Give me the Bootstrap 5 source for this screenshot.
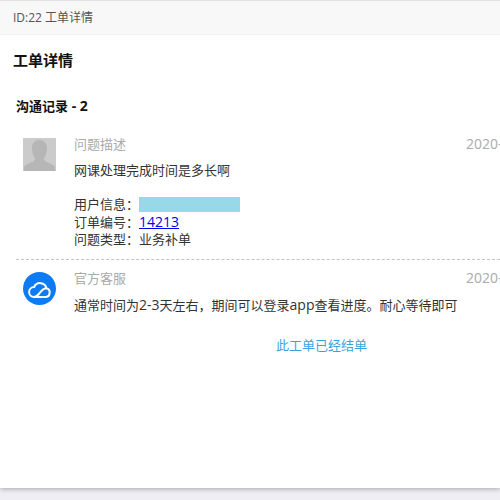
<!DOCTYPE html>
<html lang="zh">
<head>
<meta charset="utf-8">
<link rel="stylesheet" href="https://cdn.jsdelivr.net/npm/bootstrap@5.3.0/dist/css/bootstrap.min.css">
<style>
html,body{height:500px;overflow:hidden;}
body{background:#eeeef4;font-family:"Open Sans","Noto Sans CJK SC",sans-serif;font-size:13px;color:#333;}
.sheet{height:488px;background:#fff;box-shadow:0 1px 5px rgba(0,0,0,.3);border-top:1px solid #e2e2e2;overflow:hidden;}
.crumb{height:34px;background:#f8f8f8;padding-left:13px;line-height:34px;color:#555;font-size:12px;border-bottom:1px solid #f1f1f1;}
.page-title{font-size:15px;font-weight:700;color:#111;margin:0;padding:14px 0 0 13px;line-height:22px;}
.sec-title{font-size:13px;font-weight:700;color:#111;margin:0;padding:25px 0 0 16px;line-height:20px;}
.entry{padding:0 0 0 23px;gap:18px;}
.first{margin-top:21px;height:122px;}
.second{margin-top:0;padding-top:1px;}
.divider{margin:0 0 0 16px;border-top:1px dashed #c4c4c4;height:11px;}
.pic{width:33px;height:33px;flex:0 0 33px;display:block;margin-top:1px;}
.who{width:392px;flex:0 0 392px;color:#aaa;line-height:14px;font-size:13px;}
.stamp{color:#aaa;white-space:nowrap;line-height:14px;font-size:14px;}
.msg{margin-top:10px;line-height:18px;color:#333;font-size:13px;width:420px;}
.second .msg{margin-top:11px;}
.latin{font-size:14px;}
.facts{margin-top:17px;line-height:17px;color:#333;}
.facts a{color:#0000ee;font-size:14px;}
.mask{display:inline-block;width:101px;height:15px;background:#97d9e8;vertical-align:-3px;}
.closed{color:#3aa3dc;line-height:18px;font-size:13px;margin-top:22px;padding-left:276px;}
</style>
</head>
<body>
<div class="sheet">
  <div class="crumb">ID:22 工单详情</div>
  <h1 class="page-title">工单详情</h1>
  <h2 class="sec-title">沟通记录<span class="latin"> - 2</span></h2>

  <div class="entry first d-flex">
    <svg class="pic" viewBox="0 0 33 33"><rect width="33" height="33" fill="#cbcbcb"/><path d="M1 33v-4c2-3 7-4 10-6 1-1 1-2 1-3-2-2-3-6-3-10 0-5 3-8 7.500-8s7.500 3 7.500 8c0 4-1 8-3 10 0 1 0 2 1 3 3 2 8 3 10 6v4z" fill="#b6b6b6"/></svg>
    <div>
      <div class="d-flex">
        <div class="who">问题描述</div>
        <div class="stamp">2020-06-18 10:22:31</div>
      </div>
      <div class="msg">网课处理完成时间是多长啊</div>
      <div class="facts">
        <div>用户信息：<span class="mask"></span></div>
        <div>订单编号：<a href="#">14213</a></div>
        <div>问题类型：业务补单</div>
      </div>
    </div>
  </div>

  <div class="divider"></div>

  <div class="entry second d-flex">
    <svg class="pic" viewBox="0 0 33 33"><circle cx="16.500" cy="16.500" r="16.500" fill="#0d7bf2"/><path d="M11 25h11a4.500 4.500 0 0 0 1.500-8.800 6.500 6.500 0 0 0-12.300-1.200A5 5 0 0 0 11 25zM11 25c3 0 4.500-2.500 6-4.500s3.500-4.300 6.500-4.300" fill="none" stroke="#fff" stroke-width="2"/></svg>
    <div>
      <div class="d-flex">
        <div class="who">官方客服</div>
        <div class="stamp">2020-06-18 11:05:12</div>
      </div>
      <div class="msg">通常时间为<span class="latin">2-3</span>天左右，期间可以登录<span class="latin">app</span>查看进度。耐心等待即可</div>
    </div>
  </div>

  <div class="closed">此工单已经结单</div>
</div>
</body>
</html>
